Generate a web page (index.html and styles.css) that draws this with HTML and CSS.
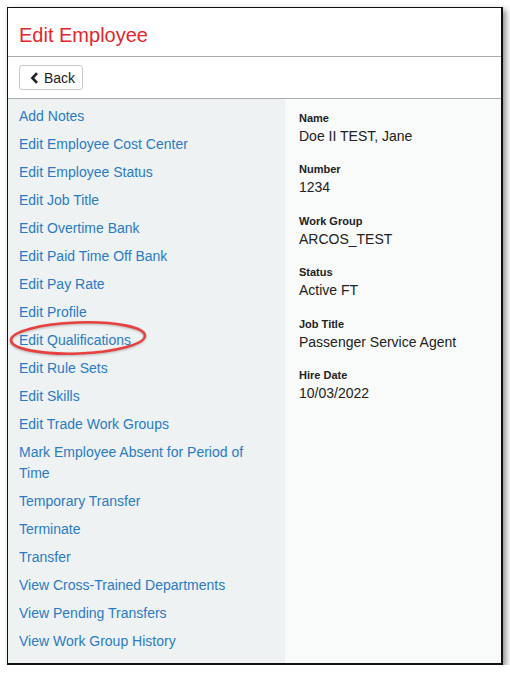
FILE: index.html
```html
<!DOCTYPE html>
<html>
<head>
<meta charset="utf-8">
<link rel="stylesheet" href="styles.css">
</head>
<body>
<div class="window">
  <div class="header"><h1 class="title">Edit Employee</h1></div>
  <div class="toolbar">
    <button class="back-btn" type="button">
      <svg class="chev" width="9" height="12" viewBox="0 0 9 12"><path d="M7 1.2 L2.4 6 L7 10.8" fill="none" stroke="#222" stroke-width="2.6" stroke-linejoin="miter"/></svg>
      <span>Back</span>
    </button>
  </div>
  <div class="content">
    <ul class="actions">
      <li><a>Add Notes</a></li>
      <li><a>Edit Employee Cost Center</a></li>
      <li><a>Edit Employee Status</a></li>
      <li><a>Edit Job Title</a></li>
      <li><a>Edit Overtime Bank</a></li>
      <li><a>Edit Paid Time Off Bank</a></li>
      <li><a>Edit Pay Rate</a></li>
      <li><a>Edit Profile</a></li>
      <li class="marked"><a>Edit Qualifications</a>
        <svg class="circle" width="140" height="40" viewBox="0 0 140 40"><ellipse cx="69" cy="20" rx="67" ry="15.5" transform="rotate(-2 69 20)" fill="none" stroke="#e8403f" stroke-width="2.6"/></svg>
      </li>
      <li><a>Edit Rule Sets</a></li>
      <li><a>Edit Skills</a></li>
      <li><a>Edit Trade Work Groups</a></li>
      <li><a>Mark Employee Absent for Period of Time</a></li>
      <li><a>Temporary Transfer</a></li>
      <li><a>Terminate</a></li>
      <li><a>Transfer</a></li>
      <li><a>View Cross-Trained Departments</a></li>
      <li><a>View Pending Transfers</a></li>
      <li><a>View Work Group History</a></li>
    </ul>
    <dl class="details">
      <div class="field"><dt>Name</dt><dd>Doe II TEST, Jane</dd></div>
      <div class="field"><dt>Number</dt><dd>1234</dd></div>
      <div class="field"><dt>Work Group</dt><dd>ARCOS_TEST</dd></div>
      <div class="field"><dt>Status</dt><dd>Active FT</dd></div>
      <div class="field"><dt>Job Title</dt><dd>Passenger Service Agent</dd></div>
      <div class="field"><dt>Hire Date</dt><dd>10/03/2022</dd></div>
    </dl>
  </div>
</div>
</body>
</html>
```
FILE: styles.css
```css
html, body {
  margin: 0;
  padding: 0;
  background: #ffffff;
}
body {
  font-family: "Liberation Sans", Arial, sans-serif;
  color: #222;
  padding: 7px 0 0 7px;
}
.window {
  width: 493px;
  height: 655px;
  border: 1px solid #111;
  border-right-width: 2px;
  border-bottom-width: 2px;
  background: #fff;
  box-shadow: 3px 3px 6px rgba(0,0,0,0.45);
  display: flex;
  flex-direction: column;
  overflow: hidden;
}
.header {
  height: 48px;
  border-bottom: 1px solid #a9acb0;
  display: flex;
  align-items: center;
  padding-left: 11px;
}
.title {
  margin: 0;
  padding-top: 6px;
  font-weight: normal;
  font-size: 20px;
  color: #e3262d;
}
.toolbar {
  height: 41px;
  border-bottom: 1px solid #a9acb0;
  display: flex;
  align-items: center;
  padding-left: 11px;
}
.back-btn {
  height: 25px;
  width: 64px;
  border: 1px solid #c9c9c9;
  border-radius: 3px;
  background: #fff;
  display: flex;
  align-items: center;
  gap: 5px;
  padding: 0 0 0 10px;
  font-family: "Liberation Sans", Arial, sans-serif;
  font-size: 14px;
  color: #222;
}
.content {
  flex: 1;
  display: flex;
}
.actions {
  list-style: none;
  margin: 0;
  padding: 3px 11px 8px 11px;
  width: 255px;
  background: #eef2f3;
}
.actions li {
  position: relative;
  padding: 3.5px 0;
  font-size: 14px;
  line-height: 21px;
}
.actions a {
  color: #2a7bc4;
  text-decoration: none;
}
.circle {
  position: absolute;
  left: -10px;
  top: -8px;
  pointer-events: none;
  filter: drop-shadow(0 1px 1px rgba(0,0,0,0.25));
}
.details {
  flex: 1;
  margin: 0;
  padding: 11px 14px 0 14px;
  background: #f9fafa;
}
.field {
  margin-bottom: 15.4px;
}
.details dt {
  font-size: 11px;
  font-weight: bold;
  line-height: 16px;
  color: #222;
}
.details dd {
  margin: 0;
  font-size: 14px;
  line-height: 20px;
  color: #222;
}
```
